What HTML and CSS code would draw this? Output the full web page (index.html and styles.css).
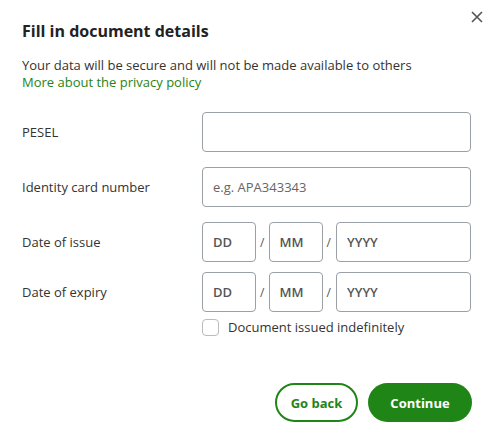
FILE: index.html
```html
<!DOCTYPE html>
<html>
<head>
  <title>Document details</title>
  <link rel="stylesheet" href="styles.css">
</head>
<body>
  <div class="dialog">
    <button class="close" aria-label="Close">
      <svg width="12" height="12" viewBox="0 0 12 12"><path d="M1 1L11 11M11 1L1 11" stroke="#555" stroke-width="1.6" fill="none"/></svg>
    </button>

    <h1>Fill in document details</h1>
    <p class="intro">Your data will be secure and will not be made available to others<br>
      <a href="#">More about the privacy policy</a></p>

    <form class="doc-form">
      <div class="row">
        <label>PESEL</label>
        <input type="text" class="field">
      </div>
      <div class="row">
        <label>Identity card number</label>
        <input type="text" class="field" placeholder="e.g. APA343343">
      </div>
      <div class="row date-row">
        <label>Date of issue</label>
        <div class="date">
          <input type="text" class="field dd" placeholder="DD">
          <span class="sep">/</span>
          <input type="text" class="field mm" placeholder="MM">
          <span class="sep">/</span>
          <input type="text" class="field yyyy" placeholder="YYYY">
        </div>
      </div>
      <div class="row date-row">
        <label>Date of expiry</label>
        <div class="date">
          <input type="text" class="field dd" placeholder="DD">
          <span class="sep">/</span>
          <input type="text" class="field mm" placeholder="MM">
          <span class="sep">/</span>
          <input type="text" class="field yyyy" placeholder="YYYY">
        </div>
      </div>
      <div class="row check-row">
        <span></span>
        <label class="check"><span class="box"></span>Document issued indefinitely</label>
      </div>

      <div class="actions">
        <button type="button" class="btn btn-outline">Go back</button>
        <button type="submit" class="btn btn-primary">Continue</button>
      </div>
    </form>
  </div>
</body>
</html>
```

FILE: styles.css
```css
body {
  margin: 0;
  font-family: "Open Sans", Arial, sans-serif;
  color: #333;
  background: #fff;
}

.dialog {
  position: relative;
  padding: 20px 22px 22px 22px;
}

.close {
  position: absolute;
  top: 11px;
  right: 11px;
  width: 12px;
  height: 12px;
  padding: 0;
  border: none;
  background: none;
  display: flex;
}

h1 {
  margin: 0;
  font-size: 16px;
  font-weight: 700;
  line-height: 23px;
  color: #222;
}

.intro {
  margin: 14px 0 0 0;
  font-size: 13px;
  line-height: 17px;
  color: #333;
}

.intro a {
  color: #1f8516;
  text-decoration: none;
}

.doc-form {
  margin-top: 21px;
  display: flex;
  flex-direction: column;
  gap: 15px;
}

.row {
  display: grid;
  grid-template-columns: 180px 269px;
  align-items: center;
}

.row label {
  font-size: 13px;
  color: #333;
}

.date-row + .date-row {
  margin-top: -5px;
}

.check-row {
  margin-top: -9px;
}

.field {
  box-sizing: border-box;
  height: 40px;
  border: 1px solid #9ba0a6;
  border-radius: 4px;
  padding: 0 10px;
  font-family: inherit;
  font-size: 13px;
  color: #333;
  background: #fff;
}

.field::placeholder {
  color: #666;
}

.date {
  display: flex;
  align-items: center;
}

.date .field::placeholder {
  color: #555;
  font-weight: 600;
}

.dd,
.mm {
  width: 54px;
}

.yyyy {
  width: 135px;
  margin-left: 1px;
}

.sep {
  width: 13px;
  text-align: center;
  font-size: 12px;
  color: #555;
}

.check {
  display: flex;
  align-items: center;
  gap: 9px;
}

.box {
  box-sizing: border-box;
  width: 17px;
  height: 17px;
  border: 1.5px solid #bbb;
  border-radius: 4px;
}

.actions {
  display: flex;
  justify-content: flex-end;
  gap: 10px;
  margin-top: 32px;
}

.btn {
  height: 39px;
  border-radius: 20px;
  font-family: inherit;
  font-size: 13px;
  font-weight: 700;
  cursor: pointer;
}

.btn-outline {
  width: 83px;
  border: 2px solid #1f8516;
  background: #fff;
  color: #1f8516;
}

.btn-primary {
  width: 104px;
  border: none;
  background: #1f8516;
  color: #fff;
}
```
